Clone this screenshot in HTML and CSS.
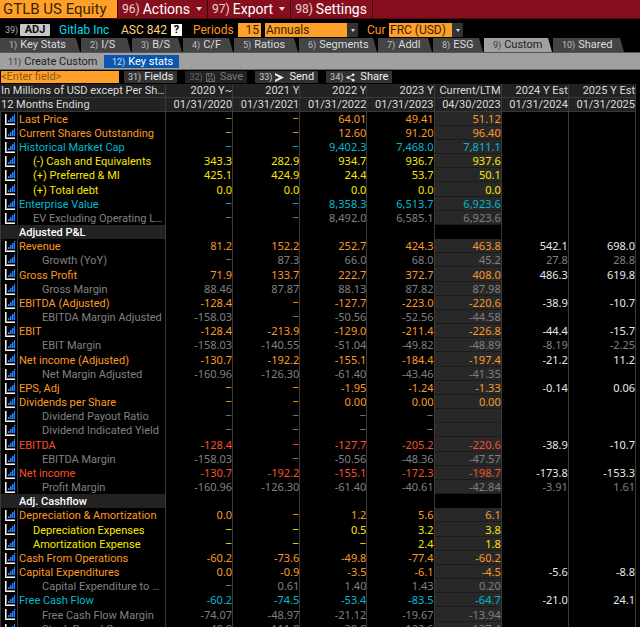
FILE: index.html
```html
<!DOCTYPE html>
<html lang="en">
<head>
<meta charset="utf-8">
<title>GTLB US Equity</title>
<link rel="stylesheet" href="styles.css">
</head>
<body>
<svg class="defs" aria-hidden="true">
  <symbol id="chart" viewBox="0 0 10 11">
    <path d="M0 0h1v10h9v1H0z" fill="#f4f4f4"/>
    <path d="M1 0h1v9h8v1H1z" fill="#8a8a8a"/>
    <path d="M3 6h1v2H3zM5 4h1v4H5zM7 2h1v6H7zM9 0h1v8H9z" fill="#1c86ff"/>
    <path d="M4 6h1v2H4zM6 4h1v4H6zM8 2h1v6H8z" fill="#0b4a9c"/>
  </symbol>
</svg>
<main class="screen">
  <header class="menu">
    <h1 class="security">GTLB US Equity</h1>
    <button class="menu-item"><span class="num">96)</span> Actions <span class="caret"></span></button>
    <button class="menu-item"><span class="num">97)</span> Export <span class="caret"></span></button>
    <button class="menu-item"><span class="num">98)</span> Settings</button>
  </header>
  <section class="options">
    <span class="num">39)</span>
    <button class="adj">ADJ</button>
    <span class="company">Gitlab Inc</span>
    <span class="standard">ASC 842</span>
    <button class="help">?</button>
    <label class="periods" for="periods">Periods</label>
    <input class="count" id="periods" value="15">
    <span class="drop freq"><select aria-label="Frequency"><option>Annuals</option></select><i class="arrow"></i></span>
    <label class="cur" for="currency">Cur</label>
    <span class="drop money"><select id="currency"><option>FRC (USD)</option></select><i class="arrow"></i></span>
  </section>
  <nav class="tabs">
    <a class="tab t1" href="#"><span class="num">1)</span>Key Stats</a>
    <a class="tab t2" href="#"><span class="num">2)</span>I/S</a>
    <a class="tab t3" href="#"><span class="num">3)</span>B/S</a>
    <a class="tab t4" href="#"><span class="num">4)</span>C/F</a>
    <a class="tab t5" href="#"><span class="num">5)</span>Ratios</a>
    <a class="tab t6" href="#"><span class="num">6)</span>Segments</a>
    <a class="tab t7" href="#"><span class="num">7)</span>Addl</a>
    <a class="tab t8" href="#"><span class="num">8)</span>ESG</a>
    <a class="tab t9 active" href="#"><span class="num">9)</span>Custom</a>
    <a class="tab t10" href="#"><span class="num">10)</span>Shared</a>
  </nav>
  <nav class="subtabs">
    <a class="subtab" href="#"><span class="num">11)</span>Create Custom</a>
    <a class="subtab chosen" href="#"><span class="num">12)</span>Key stats</a>
  </nav>
  <section class="actions">
    <input class="field" aria-label="Field" placeholder="&lt;Enter field&gt;">
    <button class="action"><span class="num">31)</span>Fields</button>
    <button class="action save" disabled><span class="num">32)</span><svg class="glyph" viewBox="0 0 10 10"><path d="M.5.5h7l2 2v7h-9zM2.500.500v3h4v-3M2.500 9.500v-3h5v3" fill="none" stroke="currentColor"/></svg>Save</button>
    <button class="action"><span class="num">33)</span><svg class="glyph" viewBox="0 0 10 10"><path d="M0 0l10 5-10 5v-2.500l5-2.500-5-2.500z" fill="currentColor"/></svg>Send</button>
    <button class="action"><span class="num">34)</span><svg class="glyph" viewBox="0 0 10 10"><path d="M8 2L2 5l6 3" fill="none" stroke="currentColor"/><circle cx="8" cy="2" r="1.500" fill="currentColor"/><circle cx="2" cy="5" r="1.500" fill="currentColor"/><circle cx="8" cy="8" r="1.500" fill="currentColor"/></svg>Share</button>
  </section>
  <div class="sheet">
    <table>
      <colgroup><col class="c-icon"><col class="c-label"><col span="7"></colgroup>
      <thead>
        <tr><th colspan="2">In Millions of USD except Per Sh…</th><th>2020 Y~</th><th>2021 Y</th><th>2022 Y</th><th>2023 Y</th><th>Current/LTM</th><th>2024 Y Est</th><th>2025 Y Est</th></tr>
        <tr><th colspan="2">12 Months Ending</th><th>01/31/2020</th><th>01/31/2021</th><th>01/31/2022</th><th>01/31/2023</th><th>04/30/2023</th><th>01/31/2024</th><th>01/31/2025</th></tr>
      </thead>
      <tbody id="rows"></tbody>
    </table>
  </div>
</main>
<script src="rows.js"></script>
</body>
</html>
```
FILE: rows.js
```js
// style | label | one value per column
const data = `
orange|Last Price|–|–|64.01|49.41|51.12||
orange|Current Shares Outstanding|–|–|12.60|91.20|96.40||
cyan|Historical Market Cap|–|–|9,402.3|7,468.0|7,811.1||
yellow in1|(-) Cash and Equivalents|343.3|282.9|934.7|936.7|937.6||
yellow in1|(+) Preferred & MI|425.1|424.9|24.4|53.7|50.1||
yellow in1|(+) Total debt|0.0|0.0|0.0|0.0|0.0||
cyan|Enterprise Value|–|–|8,358.3|6,513.7|6,923.6||
gray in1|EV Excluding Operating L…|–|–|8,492.0|6,585.1|6,923.6||
section|Adjusted P&L|||||||
orange|Revenue|81.2|152.2|252.7|424.3|463.8|542.1|698.0
gray in2|Growth (YoY)|–|87.3|66.0|68.0|45.2|27.8|28.8
orange|Gross Profit|71.9|133.7|222.7|372.7|408.0|486.3|619.8
gray in2|Gross Margin|88.46|87.87|88.13|87.82|87.98||
orange|EBITDA (Adjusted)|-128.4|–|-127.7|-223.0|-220.6|-38.9|-10.7
gray in2|EBITDA Margin Adjusted|-158.03|–|-50.56|-52.56|-44.58||
orange|EBIT|-128.4|-213.9|-129.0|-211.4|-226.8|-44.4|-15.7
gray in2|EBIT Margin|-158.03|-140.55|-51.04|-49.82|-48.89|-8.19|-2.25
orange|Net income (Adjusted)|-130.7|-192.2|-155.1|-184.4|-197.4|-21.2|11.2
gray in2|Net Margin Adjusted|-160.96|-126.30|-61.40|-43.46|-41.35||
orange|EPS, Adj|–|–|-1.95|-1.24|-1.33|-0.14|0.06
orange|Dividends per Share|–|–|0.00|0.00|0.00||
gray in2|Dividend Payout Ratio|–|–|–|–|||
gray in2|Dividend Indicated Yield|–|–|–|–|||
red|EBITDA|-128.4|–|-127.7|-205.2|-220.6|-38.9|-10.7
gray in2|EBITDA Margin|-158.03|–|-50.56|-48.36|-47.57||
red|Net income|-130.7|-192.2|-155.1|-172.3|-198.7|-173.8|-153.3
gray in2|Profit Margin|-160.96|-126.30|-61.40|-40.61|-42.84|-3.91|1.61
section|Adj. Cashflow|||||||
orange|Depreciation & Amortization|0.0|–|1.2|5.6|6.1||
yellow in1|Depreciation Expenses|–|–|0.5|3.2|3.8||
yellow in1|Amortization Expense|–|–|–|2.4|1.8||
orange|Cash From Operations|-60.2|-73.6|-49.8|-77.4|-60.2||
orange|Capital Expenditures|0.0|-0.9|-3.5|-6.1|-4.5|-5.6|-8.8
gray in2|Capital Expenditure to …|–|0.61|1.40|1.43|0.20||
cyan|Free Cash Flow|-60.2|-74.5|-53.4|-83.5|-64.7|-21.0|24.1
gray in2|Free Cash Flow Margin|-74.07|-48.97|-21.12|-19.67|-13.94||
gray in2|Stock-Based C…|49.8|111.8|30.8|122.6|127.4||
`.trim().split("\n");

const body = document.getElementById("rows");
const icon = '<svg class="chart"><use href="#chart"/></svg>';
for (const line of data) {
  const [style, label, ...values] = line.split("|");
  const row = body.insertRow();
  row.className = style;
  row.insertCell().innerHTML = style === "section" ? "" : icon;
  const head = document.createElement("th");
  head.scope = "row";
  head.textContent = label;
  row.append(head);
  for (const value of values) {
    const cell = row.insertCell();
    cell.textContent = value;
    if (value === "–") cell.className = "none";
  }
}
```
FILE: styles.css
```css
* { box-sizing: border-box; }
body {
  margin: 0;
  background: #000;
  color: #dcdcdc;
  font-family: Roboto, "Noto Sans", sans-serif;
  font-size: 11px;
  line-height: 14px;
}
button, input, select { font: inherit; border: 0; border-radius: 0; margin: 0; padding: 0; appearance: none; }
a { color: inherit; text-decoration: none; }
.defs { position: absolute; width: 0; height: 0; }
.screen { height: 100vh; overflow: hidden; display: flex; flex-direction: column; }
.num { font-size: 9px; opacity: .8; margin-right: 3px; }

.menu { display: flex; flex: none; height: 19px; background: #870f1d; border-bottom: 1px solid #4d0810; }
.security { margin: 0; width: 117px; padding-left: 3px; background: #ffa028; color: #3a2400; font-size: 15px; font-weight: 400; line-height: 18px; white-space: nowrap; }
.menu-item { display: flex; align-items: center; padding: 0 5px 0 4px; background: none; border-left: 1px solid #3d060c; color: #fff; font-size: 14px; line-height: 18px; }
.menu-item:last-child { border-right: 1px solid #3d060c; }
.menu-item .num { font-size: 12px; }
.caret { margin-left: 6px; border: 3px solid transparent; border-top: 4px solid #ddd; border-bottom: 0; }

.options { display: flex; flex: none; align-items: center; height: 19px; padding: 3px 0 0 5px; font-size: 12px; white-space: nowrap; }
.options .num { width: 12px; margin-right: 3px; }
.adj { width: 30px; height: 12px; margin-right: 9px; border-radius: 1px; background: #c8c8c8; color: #111; font-size: 11px; font-weight: 700; line-height: 12px; }
.company { width: 62px; color: #00dcf0; }
.standard { width: 50px; color: #ffd27d; }
.help { width: 11px; height: 12px; background: #fff; color: #000; font-size: 11px; font-weight: 700; line-height: 12px; }
.periods { margin-left: 11px; width: 45px; color: #ff981c; }
.count { width: 23px; height: 14px; padding-right: 2px; background: #ffa028; color: #3a2400; text-align: right; }
.drop { display: flex; margin-left: 4px; height: 14px; }
.drop select { flex: 1; min-width: 0; padding-left: 1px; background: #ffa028; color: #3a2400; line-height: 14px; }
.freq { width: 93px; }
.money { width: 74px; }
.arrow { display: grid; place-items: center; width: 11px; background: #333; }
.arrow::after { content: ""; border: 2px solid transparent; border-top: 3px solid #ddd; border-bottom: 0; }
.cur { margin-left: 9px; width: 18px; color: #ff981c; }

.tabs { display: flex; flex: none; height: 15px; border-bottom: 1px solid #555; gap: 1px; }
.tab { flex: none; padding-left: 9px; background: #444; color: #dcdcdc; clip-path: polygon(0 0, calc(100% - 4px) 0, 100% 100%, 0 100%); white-space: nowrap; }
.t1 { width: 80px; }
.t2, .t3, .t4 { width: 50px; }
.t5 { width: 64px; }
.t6 { width: 78px; }
.t7 { width: 54px; }
.t8 { width: 50px; }
.t9 { width: 68px; }
.t10 { width: 71px; }
.tab.active { background: #a0a0a0; color: #222; }

.subtabs { display: flex; flex: none; height: 17px; padding: 2px 0 1px; background: #a0a0a0; border-bottom: 1px solid #666; }
.subtab { width: 104px; padding-left: 8px; color: #222; line-height: 13px; white-space: nowrap; }
.chosen { width: 75px; background: #0a56ad; color: #fff; }

.actions { display: flex; flex: none; gap: 8px; height: 14px; padding-top: 1px; }
.field { width: 118px; height: 12px; margin: 0 -3px 0 1px; background: #ffa028; color: #8a5a14; }
.field::placeholder { color: #8a5a14; opacity: 1; }
.action { display: flex; align-items: center; height: 12px; padding: 0 4px; background: #333; color: #eee; line-height: 12px; }
.save { background: #222; color: #777; }
.glyph { width: 9px; height: 9px; margin-right: 5px; }

.sheet { padding-right: 4px; }
table { width: 100%; table-layout: fixed; border-collapse: separate; border-spacing: 0; }
.c-icon { width: 18px; }
.c-label { width: 148px; }
th, td { height: 14px; padding: 0; border-right: 1px solid #3a3a3a; font-weight: 400; line-height: 14px; text-align: right; white-space: nowrap; overflow: hidden; }
td { font-family: "Noto Sans", "Open Sans", sans-serif; }
td.none { font-family: Roboto, sans-serif; }
thead th { background: #222; border-bottom: 1px solid #383838; line-height: 13px; }
thead th:first-child, tbody th { text-align: left; }
thead th:first-child { padding-left: 1px; }
tbody tr:nth-child(6n) > * { height: 15px; }
tbody td:first-child { padding-left: 4px; border-left: 1px solid #3a3a3a; text-align: left; }
tbody th { padding-top: 1px; padding-left: 1px; line-height: 13px; }
tbody td:nth-child(7) { background: #282828; border-bottom: 1px solid #1c1c1c; line-height: 13px; }
tbody td:nth-child(n+8) { color: #e8e8e8; }
.chart { display: block; width: 10px; height: 11px; }
.orange { color: #fb9a24; }
.cyan { color: #00bcd0; }
.yellow { color: #f8e800; }
.red { color: #f8502a; }
.gray, .gray td:nth-child(n+8) { color: #808080; }
.in1 th { padding-left: 15px; }
.in2 th { padding-left: 24px; }
.section { color: #fff; }
.section th, .section td:first-child { background: #222; }
.section th { font-weight: 500; }
.section td:first-child { border-right-color: #222; }
.section td:nth-child(7) { background: #000; border-bottom-color: #000; }
```
